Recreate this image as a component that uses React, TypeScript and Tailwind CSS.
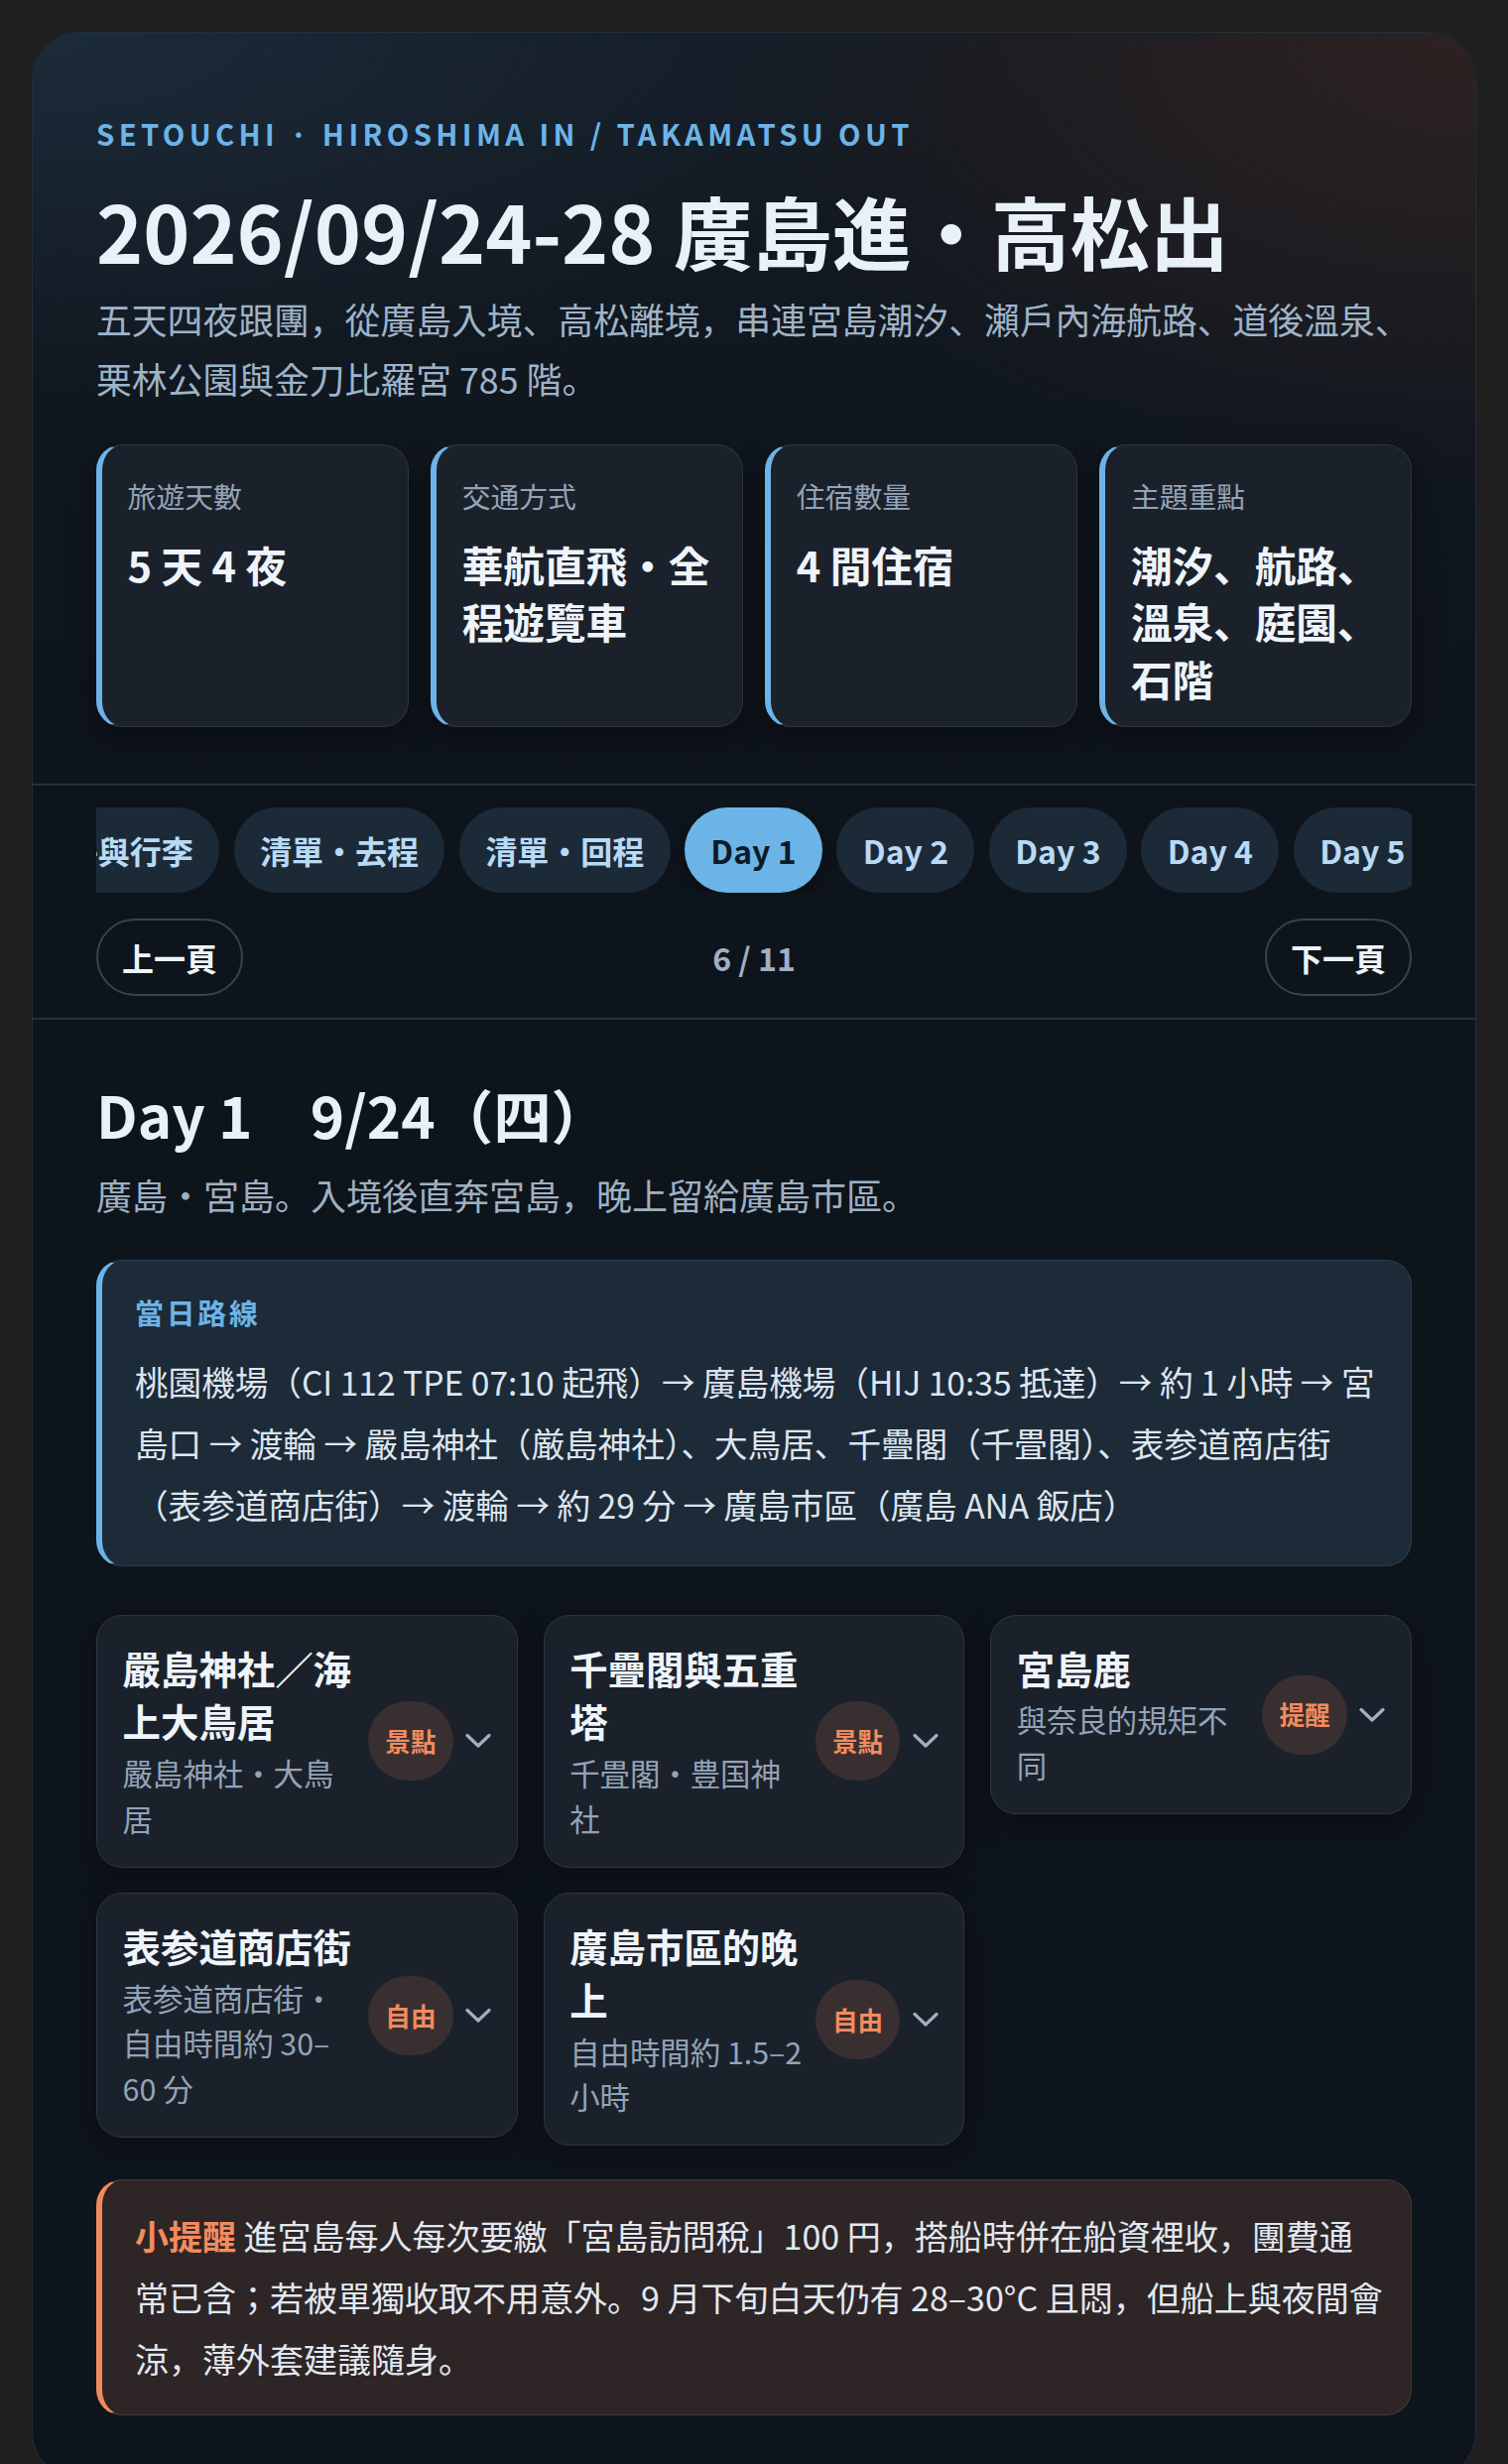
import React, { useLayoutEffect, useRef } from 'react';

const stats = [
  { label: '旅遊天數', value: '5 天 4 夜' },
  { label: '交通方式', value: '華航直飛・全程遊覽車' },
  { label: '住宿數量', value: '4 間住宿' },
  { label: '主題重點', value: '潮汐、航路、溫泉、庭園、石階' },
];

const tabs = [
  '行程總覽',
  '航班與住宿',
  '證件與行李',
  '清單・去程',
  '清單・回程',
  'Day 1',
  'Day 2',
  'Day 3',
  'Day 4',
  'Day 5',
  '實用資訊',
];

const spots = [
  { title: '嚴島神社／海上大鳥居', sub: '嚴島神社・大鳥居', tag: '景點' },
  { title: '千疊閣與五重塔', sub: '千畳閣・豊国神社', tag: '景點' },
  { title: '宮島鹿', sub: '與奈良的規矩不同', tag: '提醒' },
  { title: '表参道商店街', sub: '表参道商店街・自由時間約 30–60 分', tag: '自由' },
  { title: '廣島市區的晚上', sub: '自由時間約 1.5–2 小時', tag: '自由' },
];

const Chevron = () => (
  <svg width="26" height="16" viewBox="0 0 26 16" fill="none" className="shrink-0">
    <path d="M2 2.5 L13 13 L24 2.5" stroke="#9fb0c2" strokeWidth="3.2" strokeLinecap="round" strokeLinejoin="round" />
  </svg>
);

const App: React.FC = () => {
  const stripRef = useRef<HTMLDivElement>(null);
  const activeRef = useRef<HTMLButtonElement>(null);
  const active = 'Day 1';

  // 讓目前的分頁置中
  useLayoutEffect(() => {
    const strip = stripRef.current;
    const btn = activeRef.current;
    if (strip && btn) {
      strip.scrollLeft = btn.offsetLeft - strip.offsetLeft + btn.offsetWidth / 2 - strip.clientWidth / 2;
    }
  }, []);

  return (
    <div className="min-h-screen bg-[#1f1f1f] px-8 pt-8 pb-8 font-['Noto_Sans_CJK_JP',sans-serif]">
      <main className="overflow-hidden rounded-[48px] border border-[#22303d] bg-[#0e141b]">
        {/* header */}
        <section className="px-16 pt-[80px] pb-[57px] bg-[radial-gradient(110%_80%_at_0%_0%,#1c2b3a_0%,rgba(28,43,58,0)_60%),radial-gradient(75%_85%_at_100%_0%,#2e2222_0%,rgba(46,34,34,0)_70%),linear-gradient(180deg,#131a22_0%,#0e141b_100%)]">
          <p className="text-[29.25px] font-bold leading-[1.48] tracking-[0.15em] text-[#6cb4e8]">
            SETOUCHI · HIROSHIMA IN / TAKAMATSU OUT
          </p>
          <h1 className="mt-[27px] text-[80px] font-bold leading-[1.2] text-[#e8f0f8]">
            2026/09/24-28 廣島進・高松出
          </h1>
          <p className="mt-[13px] text-[35.8px] leading-[59.8px] text-[#9fb3c8]">
            五天四夜跟團，從廣島入境、高松離境，串連宮島潮汐、瀨戶內海航路、道後溫泉、栗林公園與金刀比羅宮 785 階。
          </p>
          <div className="mt-[36px] grid grid-cols-4 gap-[22.4px]">
            {stats.map((s) => (
              <div
                key={s.label}
                className="rounded-[26px] border border-[#2b3541] border-l-[6px] border-l-[#6cb4e8] bg-[#1b212b] px-[25.6px] pt-[29px] pb-[19px] shadow-[0_10px_30px_rgba(0,0,0,0.35)]"
              >
                <div className="text-[28.8px] leading-[1.5] text-[#93a4b7]">{s.label}</div>
                <div className="mt-[20px] text-[41.6px] font-bold leading-[1.38] text-[#eef4fa]">{s.value}</div>
              </div>
            ))}
          </div>
        </section>

        {/* tabs */}
        <section className="border-t-2 border-[#26313d] px-16 pt-[22px] pb-[22px]">
          <div ref={stripRef} className="flex gap-[14.4px] overflow-x-auto [scrollbar-width:none]">
            {tabs.map((t) => {
              const isActive = t === active;
              return (
                <button
                  key={t}
                  ref={isActive ? activeRef : undefined}
                  className={
                    isActive
                      ? 'flex h-[86px] min-w-[137.6px] shrink-0 items-center justify-center whitespace-nowrap rounded-full bg-[#6cb4e8] px-[26.4px] text-[32px] font-bold text-[#0d1a26] shadow-[0_6px_16px_rgba(0,0,0,0.35)]'
                      : 'flex h-[86px] min-w-[137.6px] shrink-0 items-center justify-center whitespace-nowrap rounded-full bg-[#1c2a38] px-[26.4px] text-[32px] font-bold text-[#b8daf5]'
                  }
                >
                  {t}
                </button>
              );
            })}
          </div>
          <div className="mt-[26px] flex items-center justify-between">
            <button className="h-[78px] rounded-full border-2 border-[#37424f] px-[24px] text-[32px] font-bold text-[#eef3f8]">
              上一頁
            </button>
            <span className="text-[32px] font-bold text-[#9fb0c2]">6 / 11</span>
            <button className="h-[78px] rounded-full border-2 border-[#37424f] px-[24px] text-[32px] font-bold text-[#eef3f8]">
              下一頁
            </button>
          </div>
        </section>

        {/* day */}
        <section className="border-t-2 border-[#26313d] px-16 pt-[60px] pb-16">
          <h2 className="text-[58.4px] font-bold leading-[1.2] text-[#e8f0f8]">Day 1　9/24（四）</h2>
          <p className="mt-[16px] text-[36px] leading-[60px] text-[#9fb0c2]">
            廣島・宮島。入境後直奔宮島，晚上留給廣島市區。
          </p>

          <div className="mt-[36px] rounded-[26px] border border-[#2d3c4c] border-l-[6px] border-l-[#6cb4e8] bg-[#1d2a38] px-[33px] pt-[30px] pb-[30px]">
            <div className="text-[28.8px] font-bold leading-[1.5] tracking-[0.1em] text-[#6cb4e8]">當日路線</div>
            <p className="mt-[17px] text-[33.6px] leading-[1.85] text-[#dde5ee]">
              桃園機場（CI 112 TPE 07:10 起飛）→ 廣島機場（HIJ 10:35 抵達）→ 約 1 小時 → 宮島口 → 渡輪 → 嚴島神社（厳島神社）、大鳥居、千疊閣（千畳閣）、表参道商店街（表参道商店街）→ 渡輪 → 約 29 分 → 廣島市區（廣島 ANA 飯店）
            </p>
          </div>

          <div className="mt-[49px] grid grid-cols-3 items-start gap-[25.6px]">
            {spots.map((s) => (
              <div
                key={s.title}
                className="flex items-center gap-[12.8px] rounded-[26px] border border-[#2c3643] bg-[#1b212b] p-[25.6px] shadow-[0_10px_30px_rgba(0,0,0,0.3)]"
              >
                <div className="min-w-0 flex-1">
                  <div className="text-[38.4px] font-bold leading-[1.4] text-[#eef4fa]">{s.title}</div>
                  <div className="mt-[3px] text-[30.4px] leading-[1.5] text-[#93a4b7]">{s.sub}</div>
                </div>
                <span className="flex h-[80px] shrink-0 items-center rounded-full bg-[#3a2f30] px-[17px] text-[25.6px] font-bold text-[#f28b5e]">
                  {s.tag}
                </span>
                <Chevron />
              </div>
            ))}
          </div>

          <div className="mt-[34px] rounded-[26px] border border-[#453a3b] border-l-[6px] border-l-[#f08a5d] bg-[#2d2526] pl-[33px] pr-[24px] pt-[25px] pb-[25px]">
            <p className="text-[34px] leading-[62px] text-[#e2e8f0]">
              <span className="font-bold text-[#f28b5e]">小提醒</span> 進宮島每人每次要繳「宮島訪問稅」100 円，搭船時併在船資裡收，團費通
              <br />
              常已含；若被單獨收取不用意外。9 月下旬白天仍有 28–30°C 且悶，但船上與夜間會涼，薄外套建議隨身。
            </p>
          </div>
        </section>
      </main>
    </div>
  );
};

export default App;
